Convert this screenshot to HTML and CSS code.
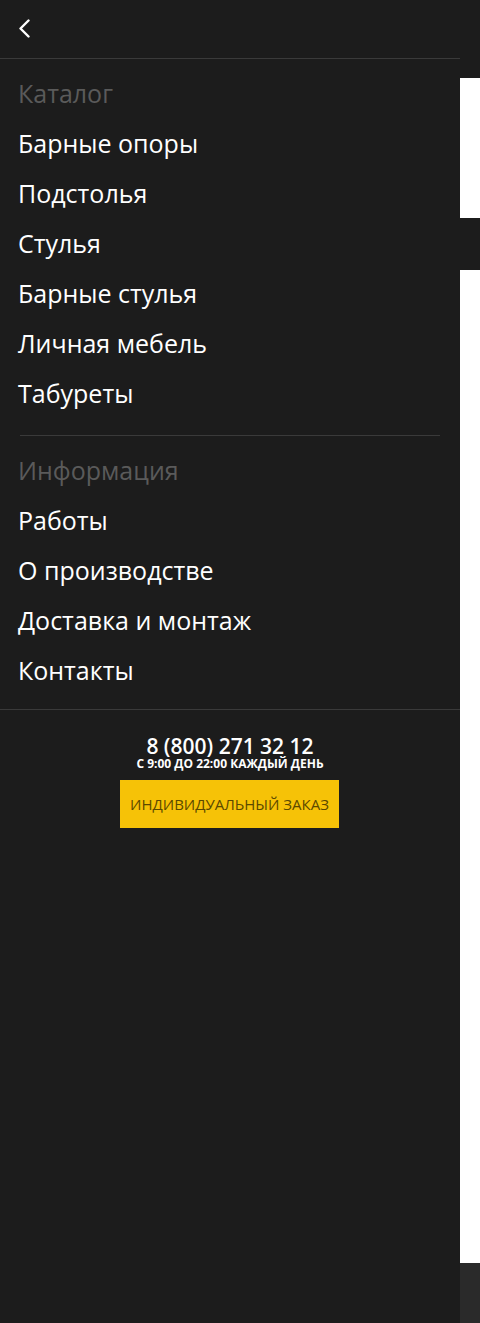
FILE: index.html
```html
<!DOCTYPE html>
<html lang="ru">
<head>
<meta charset="utf-8">
<title>Меню</title>
<link rel="stylesheet" href="styles.css">
</head>
<body>
<div class="page">
  <div class="page-top"></div>
  <div class="page-white1"></div>
  <div class="page-dark"></div>
  <div class="page-white2"></div>
  <div class="page-footer"></div>
</div>
<nav class="drawer">
  <div class="drawer-head">
    <button class="back" aria-label="Назад">
      <svg width="14" height="20" viewBox="0 0 14 20"><path d="M10.5 1.5 L2.5 9.5 L10.5 17.5" fill="none" stroke="#fff" stroke-width="2.4" stroke-linecap="round" stroke-linejoin="round"/></svg>
    </button>
  </div>
  <div class="menu">
    <div class="group group-first">
      <div class="group-title">Каталог</div>
      <a class="item" href="#">Барные опоры</a>
      <a class="item" href="#">Подстолья</a>
      <a class="item" href="#">Стулья</a>
      <a class="item" href="#">Барные стулья</a>
      <a class="item" href="#">Личная мебель</a>
      <a class="item" href="#">Табуреты</a>
    </div>
    <div class="sep"></div>
    <div class="group group-last">
      <div class="group-title">Информация</div>
      <a class="item" href="#">Работы</a>
      <a class="item" href="#">О производстве</a>
      <a class="item" href="#">Доставка и монтаж</a>
      <a class="item" href="#">Контакты</a>
    </div>
  </div>
  <div class="contacts">
    <div class="phone">8 (800) 271 32 12</div>
    <div class="hours">С 9:00 ДО 22:00 КАЖДЫЙ ДЕНЬ</div>
    <a class="order" href="#">ИНДИВИДУАЛЬНЫЙ ЗАКАЗ</a>
  </div>
</nav>
</body>
</html>
```

FILE: styles.css
```css
* { box-sizing: border-box; }
html, body { margin: 0; padding: 0; }
body {
  width: 480px;
  height: 1323px;
  overflow: hidden;
  background: #1c1c1c;
  font-family: "Open Sans", "Liberation Sans", sans-serif;
  position: relative;
}
.page {
  display: flex;
  flex-direction: column;
  height: 1323px;
}
.page-top { height: 78px; background: #1c1c1c; }
.page-white1 { height: 140px; background: #fff; }
.page-dark { height: 52px; background: #1c1c1c; }
.page-white2 { height: 993px; background: #fff; }
.page-footer { height: 60px; background: #2a2a2a; }

.drawer {
  position: absolute;
  top: 0;
  left: 0;
  width: 460px;
  height: 1323px;
  background: #1c1c1c;
  display: flex;
  flex-direction: column;
}
.drawer-head {
  height: 59px;
  border-bottom: 1px solid #3a3a3a;
  display: flex;
  align-items: flex-start;
  padding: 19px 0 0 18px;
}
.back {
  background: none;
  border: 0;
  padding: 0;
  margin: 0;
  width: 14px;
  height: 20px;
  display: block;
  cursor: pointer;
}
.back svg { display: block; }

.menu { border-bottom: 1px solid #3a3a3a; }
.group {
  display: flex;
  flex-direction: column;
  padding: 9px 0 17px 18px;
}
.group-last { padding: 9px 0 14px 18px; }
.group-title,
.item {
  font-size: 25px;
  line-height: 50px;
  height: 50px;
  white-space: nowrap;
}
.group-title { color: #5a5a5a; }
.item { color: #fff; text-decoration: none; }
.sep {
  height: 1px;
  background: #3a3a3a;
  margin: 0 20px;
}

.contacts {
  display: flex;
  flex-direction: column;
  align-items: center;
  padding-top: 25px;
}
.phone {
  color: #fff;
  font-size: 21px;
  font-weight: 600;
  line-height: 22px;
}
.hours {
  color: #fff;
  font-size: 12px;
  font-weight: 700;
  line-height: 14px;
}
.order {
  margin: 9px 1px 0 0;
  display: block;
  width: 219px;
  height: 48px;
  line-height: 48px;
  text-align: center;
  background: #f6c207;
  color: #5b4900;
  font-size: 15px;
  text-decoration: none;
  white-space: nowrap;
}
```
